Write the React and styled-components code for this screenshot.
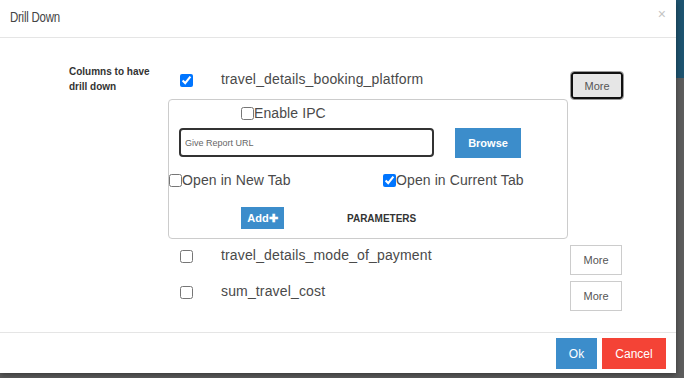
import React from "react";
import styled, { createGlobalStyle } from "styled-components";

const GlobalStyle = createGlobalStyle`
	html, body {
		margin: 0;
		padding: 0;
		background: #5d5d5d;
		font-family: "Liberation Sans", Arial, sans-serif;
	}
`;

const Backdrop = styled.div`
	width: 684px;
	height: 378px;
	overflow: hidden;
	background: linear-gradient(to bottom, #1e5470 0, #1e5470 78px, #5d5d5d 78px);
`;

const Modal = styled.div`
	width: 676px;
	height: 373px;
	background: #fff;
	display: flex;
	flex-direction: column;
	box-shadow: 0 2px 6px rgba(0, 0, 0, 0.4);
`;

const Header = styled.div`
	height: 38px;
	box-sizing: border-box;
	border-bottom: 1px solid #e5e5e5;
	display: flex;
	align-items: center;
	justify-content: space-between;
	padding: 0 10px;
`;

const Title = styled.h4`
	margin: 0 0 3px;
	font-family: "Liberation Sans Narrow", "Liberation Sans", sans-serif;
	font-weight: normal;
	font-size: 14px;
	color: #444;
	letter-spacing: -0.3px;
	transform: scaleX(0.82);
	transform-origin: left center;
`;

const Close = styled.span`
	font-size: 14px;
	color: #c4c4c4;
	margin-top: -10px;
`;

const Body = styled.div`
	flex: 1;
	display: flex;
	padding: 31px 0 0 69px;
	gap: 4px;
`;

const Label = styled.div`
	width: 95px;
	font-size: 10px;
	line-height: 15px;
	font-weight: bold;
	color: #333;
	margin-top: -5px;
`;

const Columns = styled.div`
	width: 455px;
	display: flex;
	flex-direction: column;
`;

const Row = styled.div`
	height: 30px;
	display: flex;
	align-items: flex-start;
	margin-bottom: ${(p) => (p.$gap ? "6px" : "0")};
`;

const CheckCell = styled.div`
	width: 53px;
	padding-left: 12px;
	box-sizing: border-box;
	padding-top: 4px;
`;

const Check = styled.input.attrs({ type: "checkbox" })`
	margin: 0;
	width: 13px;
	height: 13px;
	accent-color: #0075ff;
`;

const ColumnName = styled.span`
	flex: 1;
	font-size: 14px;
	color: #4a4a4a;
	line-height: 20px;
	letter-spacing: 0.15px;
`;

const MoreButton = styled.button`
	width: 52px;
	height: ${(p) => (p.$active ? "27px" : "30px")};
	margin-top: ${(p) => (p.$active ? "3px" : "0")};
	margin-right: ${(p) => (p.$active ? "0" : "1px")};
	box-sizing: border-box;
	font-family: inherit;
	font-size: 11px;
	color: #555;
	background: ${(p) => (p.$active ? "#e6e6e6" : "#fff")};
	border: ${(p) => (p.$active ? "2px solid #111" : "1px solid #ccc")};
	border-radius: ${(p) => (p.$active ? "3px" : "0")};
	outline: ${(p) => (p.$active ? "1px solid #999" : "none")};
	outline-offset: 0;
	padding: 0;
`;

const Panel = styled.div`
	width: 400px;
	height: 140px;
	box-sizing: border-box;
	border: 1px solid #ccc;
	border-radius: 4px;
	margin-bottom: 6px;
	padding: 5px 0 0 0;
	display: flex;
	flex-direction: column;
`;

const CheckLabel = styled.label`
	display: flex;
	align-items: center;
	font-size: 14px;
	color: #4a4a4a;
	letter-spacing: 0.1px;
	padding-left: ${(p) => p.$indent || 0}px;
	width: ${(p) => (p.$width ? p.$width + "px" : "auto")};
`;

const UrlRow = styled.div`
	display: flex;
	align-items: flex-start;
	gap: 21px;
	padding-left: 10px;
	margin-top: 7px;
`;

const UrlInput = styled.input`
	width: 255px;
	height: 29px;
	box-sizing: border-box;
	border: 2px solid #333;
	border-radius: 4px;
	padding: 0 4px;
	font-family: inherit;
	font-size: 9px;
	color: #555;
	outline: none;
	&::placeholder {
		color: #666;
	}
`;

const BlueButton = styled.button`
	width: ${(p) => p.$w}px;
	height: ${(p) => p.$h}px;
	background: #3c8dcb;
	color: #fff;
	border: none;
	padding: 0;
	font-family: inherit;
	font-size: ${(p) => p.$size || 11}px;
	font-weight: ${(p) => (p.$bold ? "bold" : "normal")};
`;

const TabRow = styled.div`
	display: flex;
	align-items: center;
	margin-top: 14px;
`;

const ParamRow = styled.div`
	display: flex;
	align-items: center;
	padding-left: 72px;
	margin-top: 19px;
	gap: 63px;
`;

const ParamTitle = styled.span`
	font-size: 10px;
	font-weight: bold;
	color: #333;
`;

const Footer = styled.div`
	height: 41px;
	box-sizing: border-box;
	border-top: 1px solid #e5e5e5;
	display: flex;
	justify-content: flex-end;
	align-items: flex-start;
	gap: 5px;
	padding: 5px 10px 0 0;
`;

const FooterButton = styled.button`
	width: ${(p) => p.$w}px;
	height: 31px;
	border: none;
	padding: 0;
	color: #fff;
	font-family: inherit;
	font-size: 12px;
	background: ${(p) => (p.$danger ? "#f44336" : "#3c8dcb")};
`;

const columns = [
	{ name: "travel_details_booking_platform", checked: true },
	{ name: "travel_details_mode_of_payment", checked: false },
	{ name: "sum_travel_cost", checked: false },
];

const App = () => {
	return (
		<>
			<GlobalStyle />
			<Backdrop>
				<Modal>
					<Header>
						<Title>Drill Down</Title>
						<Close>×</Close>
					</Header>
					<Body>
						<Label>
							Columns to have
							<br />
							drill down
						</Label>
						<Columns>
							{columns.map((col, i) => (
								<React.Fragment key={col.name}>
									<Row $gap={i > 0}>
										<CheckCell>
											<Check defaultChecked={col.checked} />
										</CheckCell>
										<ColumnName>{col.name}</ColumnName>
										<MoreButton $active={i === 0}>More</MoreButton>
									</Row>
									{i === 0 && (
										<Panel>
											<CheckLabel $indent={72}>
												<Check />
												Enable IPC
											</CheckLabel>
											<UrlRow>
												<UrlInput placeholder="Give Report URL" />
												<BlueButton $w={66} $h={30} $bold>
													Browse
												</BlueButton>
											</UrlRow>
											<TabRow>
												<CheckLabel $width={214}>
													<Check />
													Open in New Tab
												</CheckLabel>
												<CheckLabel>
													<Check defaultChecked />
													Open in Current Tab
												</CheckLabel>
											</TabRow>
											<ParamRow>
												<BlueButton $w={43} $h={22} $bold>
													Add✚
												</BlueButton>
												<ParamTitle>PARAMETERS</ParamTitle>
											</ParamRow>
										</Panel>
									)}
								</React.Fragment>
							))}
						</Columns>
					</Body>
					<Footer>
						<FooterButton $w={41}>Ok</FooterButton>
						<FooterButton $w={64} $danger>
							Cancel
						</FooterButton>
					</Footer>
				</Modal>
			</Backdrop>
		</>
	);
};

export default App;
